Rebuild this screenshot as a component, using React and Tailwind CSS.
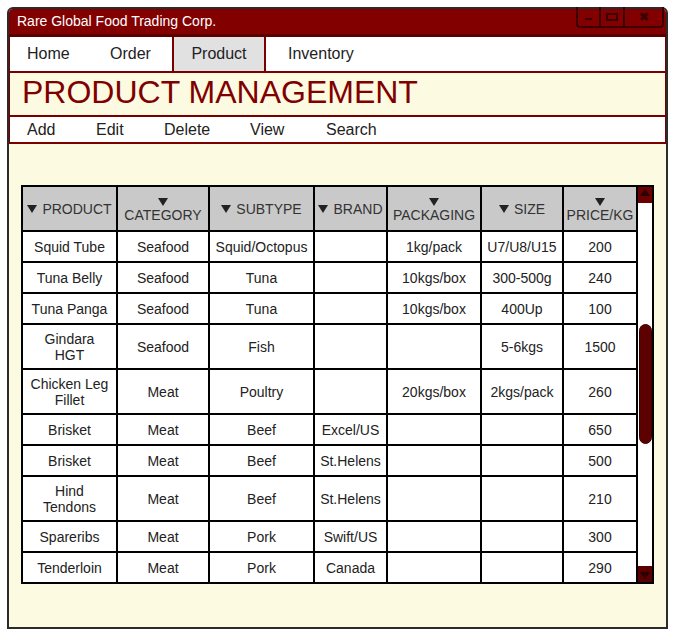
const COLS = [
  { key: 'product', label: 'PRODUCT', w: 'w-[95px]', stacked: false },
  { key: 'category', label: 'CATEGORY', w: 'w-[92px]', stacked: true },
  { key: 'subtype', label: 'SUBTYPE', w: 'w-[105px]', stacked: false },
  { key: 'brand', label: 'BRAND', w: 'w-[73px]', stacked: false },
  { key: 'packaging', label: 'PACKAGING', w: 'w-[94px]', stacked: true },
  { key: 'size', label: 'SIZE', w: 'w-[82px]', stacked: false },
  { key: 'price', label: 'PRICE/KG', w: 'w-[74px]', stacked: true },
]

// product names given as lines; two lines make a tall row
const ROWS = [
  [['Squid Tube'], 'Seafood', 'Squid/Octopus', '', '1kg/pack', 'U7/U8/U15', '200'],
  [['Tuna Belly'], 'Seafood', 'Tuna', '', '10kgs/box', '300-500g', '240'],
  [['Tuna Panga'], 'Seafood', 'Tuna', '', '10kgs/box', '400Up', '100'],
  [['Gindara', 'HGT'], 'Seafood', 'Fish', '', '', '5-6kgs', '1500'],
  [['Chicken Leg', 'Fillet'], 'Meat', 'Poultry', '', '20kgs/box', '2kgs/pack', '260'],
  [['Brisket'], 'Meat', 'Beef', 'Excel/US', '', '', '650'],
  [['Brisket'], 'Meat', 'Beef', 'St.Helens', '', '', '500'],
  [['Hind', 'Tendons'], 'Meat', 'Beef', 'St.Helens', '', '', '210'],
  [['Spareribs'], 'Meat', 'Pork', 'Swift/US', '', '', '300'],
  [['Tenderloin'], 'Meat', 'Pork', 'Canada', '', '', '290'],
]

const NAV = ['Home', 'Order', 'Product', 'Inventory']

function SortArrow() {
  return <span className="inline-block h-0 w-0 border-x-[5px] border-t-[8px] border-x-transparent border-t-[#222]" />
}

function WindowControls() {
  return (
    <div className="absolute right-[2px] top-[-2px] flex h-[21px] rounded-b-[4px] border-2 border-t-0 border-[#3d0000]">
      <div className="flex w-[23px] items-end justify-center pb-[6px] border-r-2 border-[#3d0000]">
        <div className="h-[2px] w-[7px] bg-[#3d0000]" />
      </div>
      <div className="flex w-[24px] items-center justify-center border-r-2 border-[#3d0000]">
        <div className="h-[8px] w-[12px] border-2 border-[#3d0000]" />
      </div>
      <div className="flex w-[37px] items-center justify-center text-[12px] font-bold leading-none text-[#3d0000]">
        ✖
      </div>
    </div>
  )
}

function Scrollbar() {
  return (
    <div className="flex w-[16px] flex-col border-2 border-l-0 border-black bg-white">
      <div className="flex h-[16px] items-start justify-center bg-[#6a0000] pt-[2px]">
        <div className="h-0 w-0 border-x-[5px] border-b-[7px] border-x-transparent border-b-[#2a0000]" />
      </div>
      <div className="h-[121px]" />
      <div className="mx-auto h-[120px] w-[13px] rounded-full border border-[#3a0000] bg-[#5c0000]" />
      <div className="flex-1" />
      <div className="flex h-[16px] items-end justify-center bg-[#5a0000] pb-[3px]">
        <div className="h-0 w-0 border-x-[5px] border-t-[7px] border-x-transparent border-t-[#2a0000]" />
      </div>
    </div>
  )
}

function ProductTable() {
  return (
    <table className="w-[615px] table-fixed border-collapse border-2 border-black bg-white text-[14px] text-[#222]">
      <colgroup>
        {COLS.map((c) => (
          <col key={c.key} className={c.w} />
        ))}
      </colgroup>
      <thead>
        <tr className="h-[45px] bg-[#c9c9c9]">
          {COLS.map((c) => (
            <th key={c.key} className="overflow-visible whitespace-nowrap border-2 border-black p-0 align-middle text-center text-[14px] font-normal leading-[14px] text-[#333]">
              {c.stacked ? (
                <div className="flex h-[41px] flex-col items-center pt-[10px]">
                  <SortArrow />
                  <span className="mt-[2px] leading-[15px]">{c.label}</span>
                </div>
              ) : (
                <span className="inline-flex items-center gap-[5px]">
                  <SortArrow />
                  {c.label}
                </span>
              )}
            </th>
          ))}
        </tr>
      </thead>
      <tbody>
        {ROWS.map((r, i) => (
          <tr key={i} className={r[0].length > 1 ? 'h-[45px]' : 'h-[31px]'}>
            <td className="border-2 border-black px-[4px] py-0 text-center leading-[16px]">
              {r[0].map((line) => (
                <div key={line}>{line}</div>
              ))}
            </td>
            {r.slice(1).map((v, j) => (
              <td key={j} className="border-2 border-black px-[4px] py-0 text-center leading-[16px]">
                {v}
              </td>
            ))}
          </tr>
        ))}
      </tbody>
    </table>
  )
}

export default function App() {
  return (
    <div className="h-[638px] w-[676px] bg-white pl-[7px] pt-[7px]" style={{ fontFamily: '"Liberation Sans", Arial, sans-serif' }}>
      <div className="flex h-[622px] w-[661px] flex-col rounded-t-[6px] border-2 border-[#2b2b2b] bg-[#fdfae2]">
        {/* Title bar */}
        <div className="relative flex h-[28px] items-center rounded-t-[4px] border-b-[3px] border-[#5a0000] bg-[#820000] pl-[8px] text-[14px] text-white">
          Rare Global Food Trading Corp.
          <WindowControls />
        </div>

        {/* Nav */}
        <div className="flex h-[36px] items-stretch border-x border-b-2 border-[#7a0000] bg-white text-[16px] text-[#222]">
          {NAV.map((n) => {
            if (n === 'Product') {
              return (
                <div key={n} className="flex w-[94px] items-center justify-center border-x-2 border-[#7a0000] bg-[#e1e1e1]">
                  {n}
                </div>
              )
            }
            const w = n === 'Home' ? 'w-[80px] pl-[17px]' : n === 'Order' ? 'w-[82px] pl-[20px]' : 'pl-[22px]'
            return (
              <div key={n} className={`flex items-center ${w}`}>
                {n}
              </div>
            )
          })}
        </div>

        {/* Heading */}
        <div className="flex h-[44px] items-start border-x border-b-2 border-[#7a0000] pl-[12px] pt-[3px] text-[32px] leading-[32px] text-[#800000]">
          PRODUCT MANAGEMENT
        </div>

        {/* Toolbar */}
        <div className="flex h-[27px] items-center border-x border-b-2 border-[#7a0000] bg-white pl-[17px] text-[16px] text-[#222]">
          <span className="w-[69px]">Add</span>
          <span className="w-[68px]">Edit</span>
          <span className="w-[86px]">Delete</span>
          <span className="w-[76px]">View</span>
          <span>Search</span>
        </div>

        {/* Content */}
        <div className="flex-1 pl-[12px] pt-[41px]">
          <div className="flex items-stretch">
            <ProductTable />
            <Scrollbar />
          </div>
        </div>
      </div>
    </div>
  )
}
